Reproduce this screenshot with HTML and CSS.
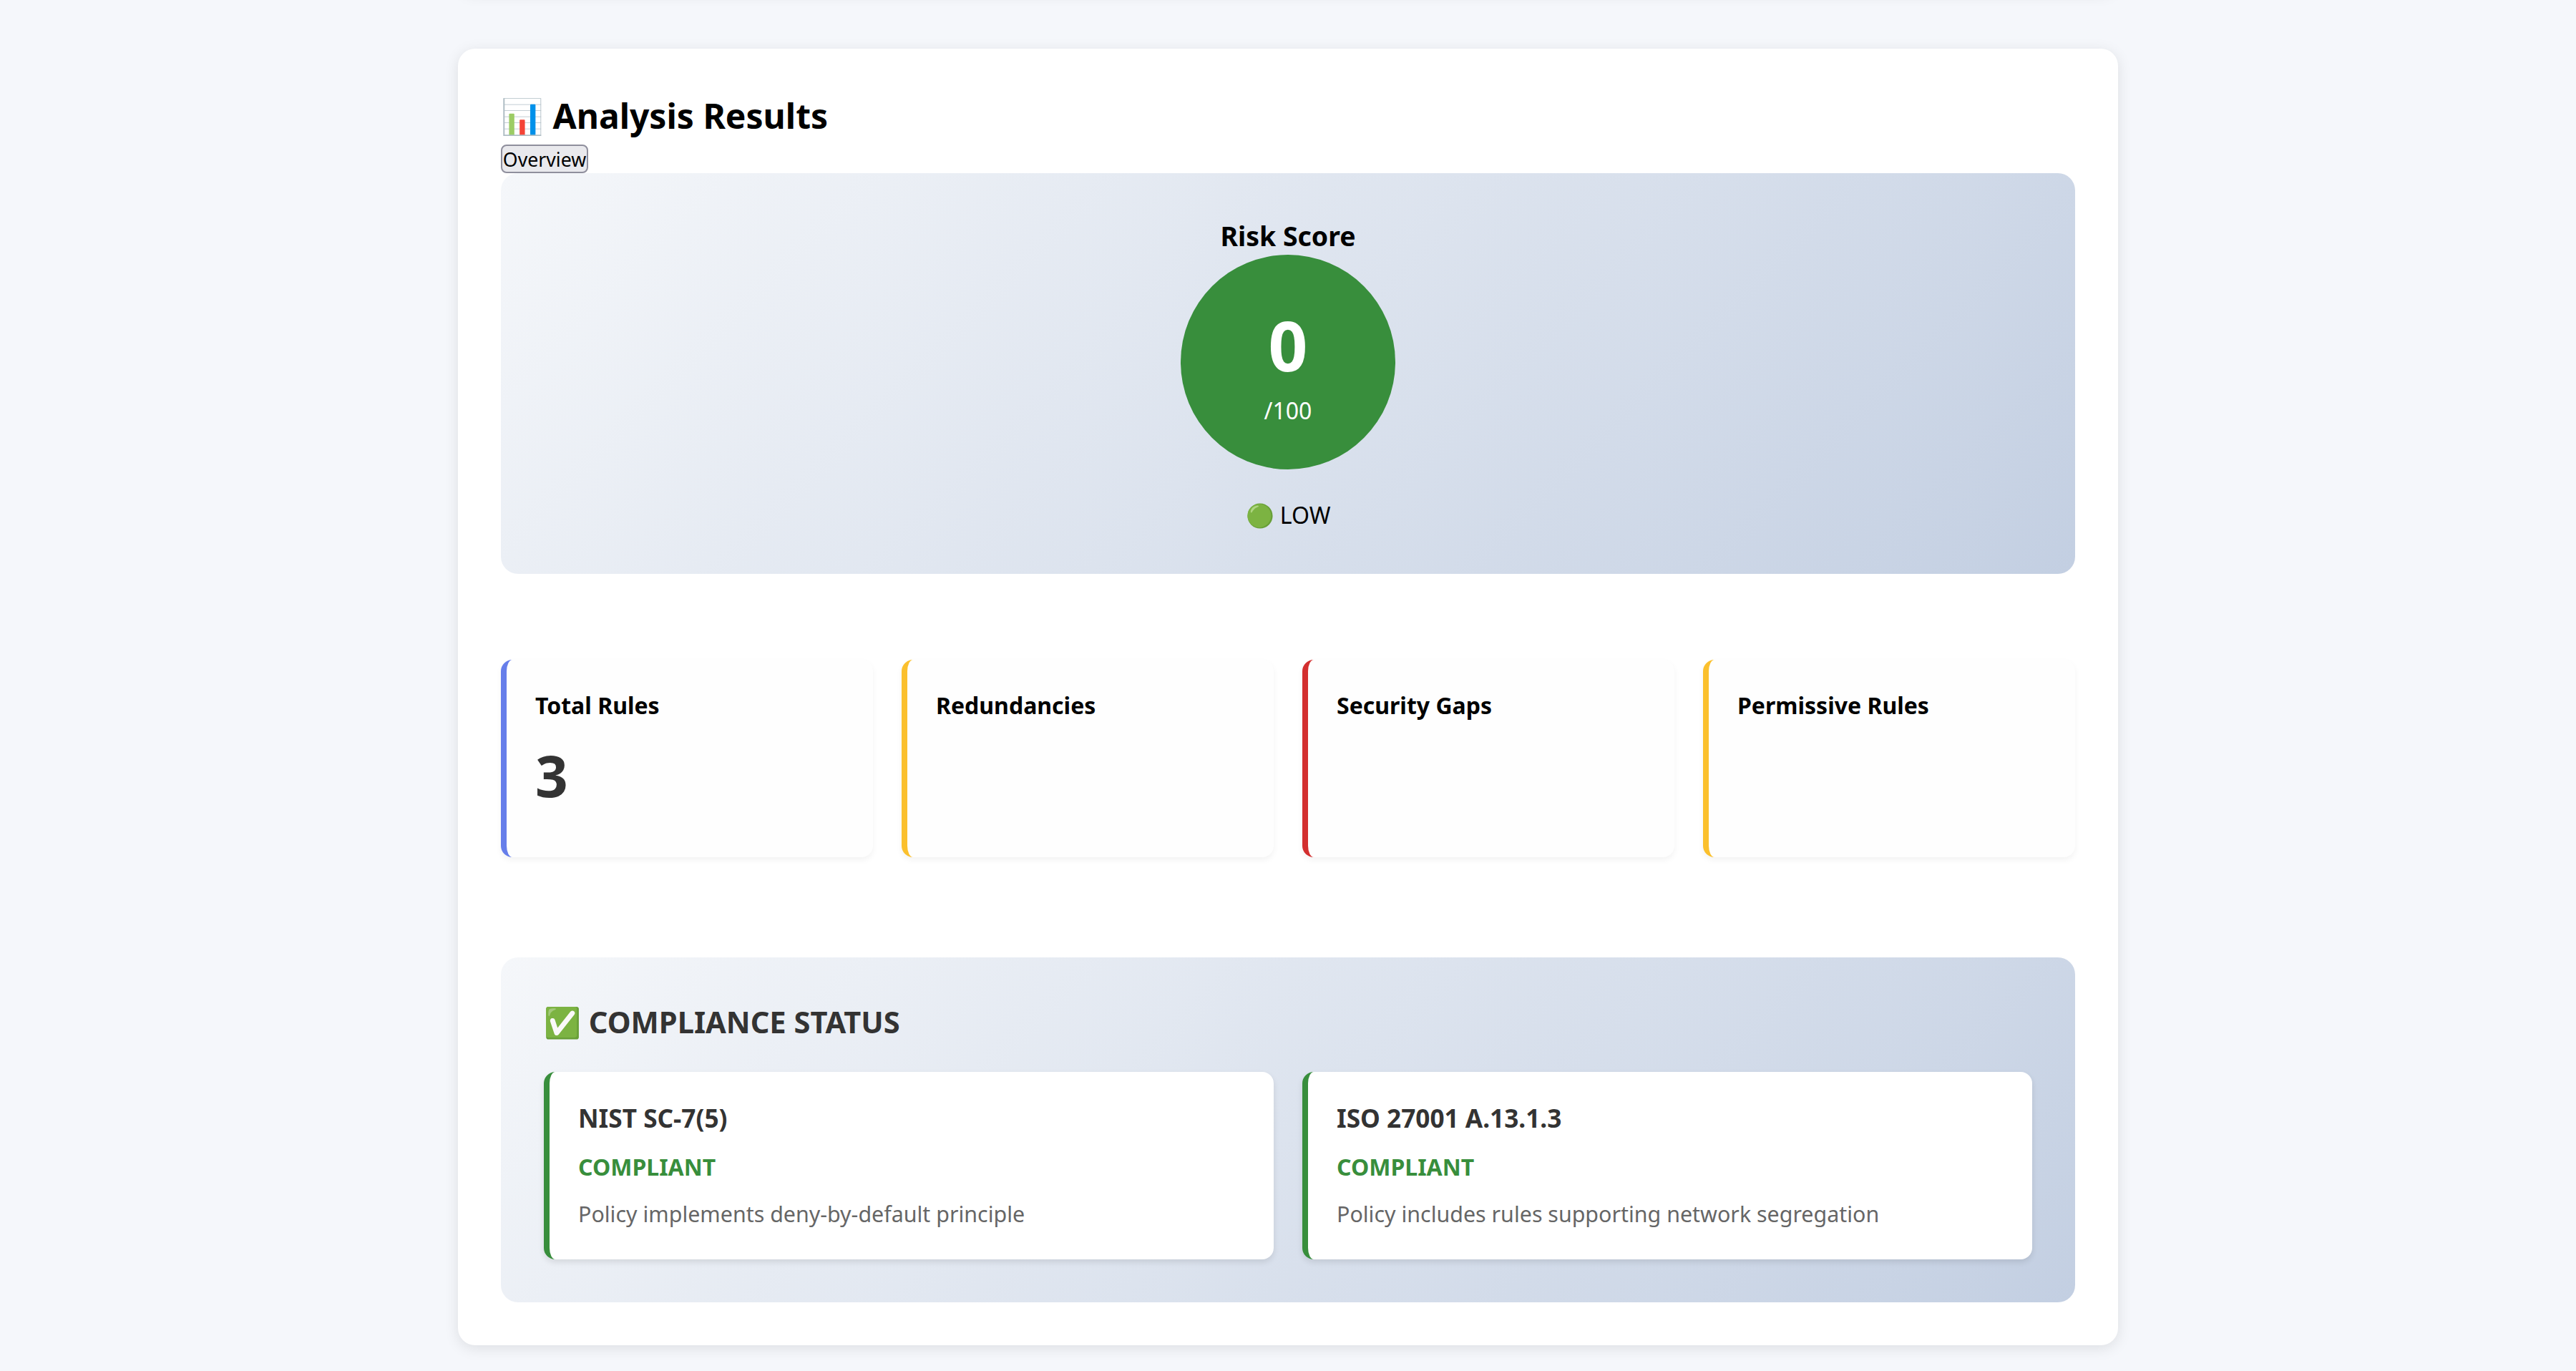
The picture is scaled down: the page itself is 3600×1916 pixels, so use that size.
FILE: index.html
```html
<!DOCTYPE html>
<html lang="en">
<head>
  <meta charset="UTF-8" />
  <meta name="viewport" content="width=device-width, initial-scale=1.0" />
  <title>Analysis Results</title>
  <link rel="stylesheet" href="styles.css">
</head>
<body>
  <div class="container">
    <div class="card upload-card"></div>

    <div class="card">
      <h2>📊 Analysis Results</h2>
      <div class="tabs">
        <button class="tab">Overview</button>
      </div>

      <div class="risk-score">
        <h3>Risk Score</h3>
        <div class="score-circle">
          <span class="score-value">0</span>
          <span class="score-label">/100</span>
        </div>
        <p class="risk-level">🟢 LOW</p>
      </div>

      <div class="stats">
        <div class="stat">
          <h4>Total Rules</h4>
          <p class="stat-number">3</p>
        </div>
        <div class="stat warning">
          <h4>Redundancies</h4>
        </div>
        <div class="stat danger">
          <h4>Security Gaps</h4>
        </div>
        <div class="stat warning">
          <h4>Permissive Rules</h4>
        </div>
      </div>

      <div class="compliance">
        <h3>✅ COMPLIANCE STATUS</h3>
        <div class="compliance-grid">
          <div class="compliance-item">
            <h4>NIST SC-7(5)</h4>
            <p class="status">COMPLIANT</p>
            <p class="details">Policy implements deny-by-default principle</p>
          </div>
          <div class="compliance-item">
            <h4>ISO 27001 A.13.1.3</h4>
            <p class="status">COMPLIANT</p>
            <p class="details">Policy includes rules supporting network segregation</p>
          </div>
        </div>
      </div>
    </div>
  </div>
</body>
</html>
```
FILE: styles.css
```css
* { margin: 0; padding: 0; box-sizing: border-box; }
body { font-family: "Noto Sans", sans-serif; font-size: 32px; background: #f5f7fb; color: #000; }
.container { display: flow-root; width: 2320px; margin: 0 auto; padding-bottom: 36px; }
.card { background: white; padding: 60px; border-radius: 24px; box-shadow: 0 4px 20px rgba(0,0,0,0.1); }

/* only the bottom shadow of this one shows at the top of the view */
.upload-card { height: 200px; margin-top: -212px; margin-bottom: 80px; }

h2 { font-size: 48px; line-height: 68px; margin-bottom: 6px; }
.tabs { display: flex; height: 40px; }
.tab { width: 122px; height: 40px; font-family: inherit; font-size: 26.67px; line-height: 37px; color: #000; background: #e9e9ed; border: 2px solid #8f8f9d; border-radius: 8px; cursor: pointer; }
.tab:hover { background: #d0d0d7; }

.risk-score { display: flex; flex-direction: column; align-items: center; padding: 60px; background: linear-gradient(135deg, #f5f7fa 0%, #c3cfe2 100%); border-radius: 24px; }
.risk-score h3 { font-size: 37.44px; line-height: 52px; padding-top: 2px; }
.score-circle { width: 300px; height: 300px; border-radius: 50%; background: #388e3c; color: white; display: flex; flex-direction: column; align-items: center; justify-content: center; gap: 5px; }
.score-value { font-size: 96px; font-weight: bold; line-height: 130px; }
.score-label { line-height: 44px; }
.risk-level { margin-top: 42px; line-height: 44px; }

.stats { display: grid; grid-template-columns: repeat(4, 1fr); gap: 40px; margin: 120px 0 140px; }
.stat { height: 276px; padding: 40px; background: #fefefe; border-left: 8px solid #667eea; border-radius: 16px; box-shadow: 0 4px 8px rgba(0,0,0,0.05); }
.stat.warning { border-left-color: #fbc02d; }
.stat.danger { border-left-color: #d32f2f; }
.stat h4 { font-size: 32px; line-height: 48px; }
.stat-number { margin-top: 18px; font-size: 80px; font-weight: bold; line-height: 109px; color: #333; }

.compliance { padding: 60px; background: linear-gradient(135deg, #f5f7fa 0%, #c3cfe2 100%); border-radius: 24px; }
.compliance h3 { font-size: 41.6px; line-height: 60px; margin-bottom: 40px; color: #333; }
.compliance-grid { display: grid; grid-template-columns: 1fr 1fr; gap: 40px; }
.compliance-item { height: 262px; padding: 40px; background: white; border-left: 8px solid #388e3c; border-radius: 16px; box-shadow: 0 4px 8px rgba(0,0,0,0.1); }
.compliance-item h4 { font-size: 35.2px; line-height: 48px; margin-bottom: 22px; color: #333; }
.status { font-weight: bold; line-height: 46px; margin-bottom: 19px; color: #388e3c; }
.details { font-size: 30.4px; line-height: 48px; color: #666; }
```
